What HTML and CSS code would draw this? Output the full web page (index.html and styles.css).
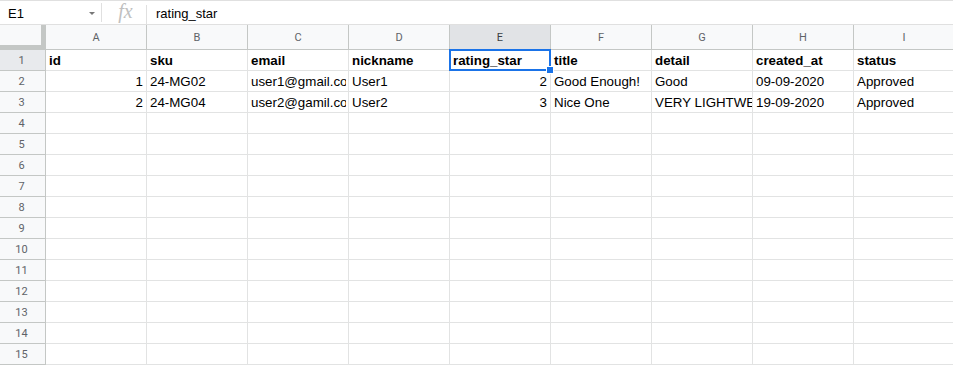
FILE: index.html
```html
<!DOCTYPE html>
<html>
<head>
<meta charset="utf-8">
<link rel="stylesheet" href="styles.css">
</head>
<body>
<div class="formula-bar">
  <div class="name-box"><span class="name">E1</span><span class="caret"></span></div>
  <div class="fx">fx</div>
  <div class="formula">rating_star</div>
</div>
<div class="sheet">
  <div class="corner"></div>
  <div class="colh">A</div><div class="colh">B</div><div class="colh">C</div><div class="colh">D</div><div class="colh sel">E</div><div class="colh">F</div><div class="colh">G</div><div class="colh">H</div><div class="colh">I</div>

  <div class="rowh sel">1</div>
  <div class="c b">id</div><div class="c b">sku</div><div class="c b">email</div><div class="c b">nickname</div><div class="c b active">rating_star</div><div class="c b">title</div><div class="c b">detail</div><div class="c b">created_at</div><div class="c b">status</div>

  <div class="rowh">2</div>
  <div class="c num">1</div><div class="c">24-MG02</div><div class="c"><span class="clip">user1@gmail.com</span></div><div class="c">User1</div><div class="c num">2</div><div class="c">Good Enough!</div><div class="c">Good</div><div class="c">09-09-2020</div><div class="c">Approved</div>

  <div class="rowh">3</div>
  <div class="c num">2</div><div class="c">24-MG04</div><div class="c"><span class="clip">user2@gamil.com</span></div><div class="c">User2</div><div class="c num">3</div><div class="c">Nice One</div><div class="c">VERY LIGHTWEIGHT</div><div class="c">19-09-2020</div><div class="c">Approved</div>

  <div class="rowh">4</div><div class="c"></div><div class="c"></div><div class="c"></div><div class="c"></div><div class="c"></div><div class="c"></div><div class="c"></div><div class="c"></div><div class="c"></div>
  <div class="rowh">5</div><div class="c"></div><div class="c"></div><div class="c"></div><div class="c"></div><div class="c"></div><div class="c"></div><div class="c"></div><div class="c"></div><div class="c"></div>
  <div class="rowh">6</div><div class="c"></div><div class="c"></div><div class="c"></div><div class="c"></div><div class="c"></div><div class="c"></div><div class="c"></div><div class="c"></div><div class="c"></div>
  <div class="rowh">7</div><div class="c"></div><div class="c"></div><div class="c"></div><div class="c"></div><div class="c"></div><div class="c"></div><div class="c"></div><div class="c"></div><div class="c"></div>
  <div class="rowh">8</div><div class="c"></div><div class="c"></div><div class="c"></div><div class="c"></div><div class="c"></div><div class="c"></div><div class="c"></div><div class="c"></div><div class="c"></div>
  <div class="rowh">9</div><div class="c"></div><div class="c"></div><div class="c"></div><div class="c"></div><div class="c"></div><div class="c"></div><div class="c"></div><div class="c"></div><div class="c"></div>
  <div class="rowh">10</div><div class="c"></div><div class="c"></div><div class="c"></div><div class="c"></div><div class="c"></div><div class="c"></div><div class="c"></div><div class="c"></div><div class="c"></div>
  <div class="rowh">11</div><div class="c"></div><div class="c"></div><div class="c"></div><div class="c"></div><div class="c"></div><div class="c"></div><div class="c"></div><div class="c"></div><div class="c"></div>
  <div class="rowh">12</div><div class="c"></div><div class="c"></div><div class="c"></div><div class="c"></div><div class="c"></div><div class="c"></div><div class="c"></div><div class="c"></div><div class="c"></div>
  <div class="rowh">13</div><div class="c"></div><div class="c"></div><div class="c"></div><div class="c"></div><div class="c"></div><div class="c"></div><div class="c"></div><div class="c"></div><div class="c"></div>
  <div class="rowh">14</div><div class="c"></div><div class="c"></div><div class="c"></div><div class="c"></div><div class="c"></div><div class="c"></div><div class="c"></div><div class="c"></div><div class="c"></div>
  <div class="rowh">15</div><div class="c"></div><div class="c"></div><div class="c"></div><div class="c"></div><div class="c"></div><div class="c"></div><div class="c"></div><div class="c"></div><div class="c"></div>
</div>
</body>
</html>
```
FILE: styles.css
```css
html, body {
  margin: 0;
  padding: 0;
  background: #fff;
  overflow: hidden;
}
body {
  width: 953px;
  height: 366px;
  font-family: "Liberation Sans", Arial, sans-serif;
  color: #000;
}
.formula-bar {
  display: flex;
  align-items: stretch;
  height: 25px;
  box-sizing: border-box;
  border-top: 1px solid #e0e0e0;
  border-bottom: 1px solid #e0e0e0;
}
.name-box {
  width: 102px;
  box-sizing: border-box;
  display: flex;
  align-items: center;
  padding-left: 8px;
  position: relative;
}
.name-box::after {
  content: "";
  position: absolute;
  right: 0;
  top: 2px;
  bottom: 2px;
  width: 1px;
  background: #e0e0e0;
}
.name {
  font-size: 13px;
  flex: 1;
  padding-top: 1px;
}
.caret {
  width: 0;
  height: 0;
  border-left: 3px solid transparent;
  border-right: 3px solid transparent;
  border-top: 3px solid #777;
  margin-right: 7px;
  margin-top: 2px;
}
.fx {
  width: 45px;
  box-sizing: border-box;
  text-align: center;
  font-family: "Liberation Serif", "Times New Roman", serif;
  font-style: italic;
  font-size: 20px;
  line-height: 21px;
  color: #c0c0c0;
  position: relative;
  padding-left: 2px;
}
.fx::after {
  content: "";
  position: absolute;
  right: 0;
  top: 4px;
  bottom: 0;
  width: 1px;
  background: #e0e0e0;
}
.formula {
  font-size: 13px;
  padding-left: 9px;
  display: flex;
  align-items: center;
  padding-top: 1px;
}
.sheet {
  display: grid;
  grid-template-columns: 46px repeat(9, 101px);
  grid-template-rows: 25px;
  grid-auto-rows: 21px;
}
.corner {
  background: #f8f9fa;
  box-sizing: border-box;
  border-right: 5px solid #c4c7c5;
  border-bottom: 5px solid #c4c7c5;
}
.colh {
  background: #f8f9fa;
  box-sizing: border-box;
  border-right: 1px solid #c4c7c5;
  border-bottom: 1px solid #c4c7c5;
  font-family: Roboto, "Liberation Sans", sans-serif;
  font-size: 11px;
  color: #5f6368;
  text-align: center;
  line-height: 24px;
  padding-top: 1px;
}
.colh.sel {
  background: #e1e3e6;
  color: #3c4043;
}
.rowh {
  background: #f8f9fa;
  box-sizing: border-box;
  border-right: 1px solid #c4c7c5;
  border-bottom: 1px solid #c4c7c5;
  font-family: Roboto, "Liberation Sans", sans-serif;
  font-size: 11px;
  color: #5f6368;
  text-align: center;
  line-height: 20px;
  padding: 1px 2px 0 0;
}
.rowh.sel {
  background: #e8eaed;
}
.c {
  box-sizing: border-box;
  border-right: 1px solid #e2e3e3;
  border-bottom: 1px solid #e2e3e3;
  font-size: 13.33px;
  line-height: 20px;
  padding: 1px 3px 0;
  white-space: nowrap;
  overflow: hidden;
  text-overflow: clip;
}
.clip {
  display: block;
  overflow: hidden;
  margin-right: -1px;
}
.c.b {
  font-weight: bold;
}
.c.num {
  text-align: right;
}
.c.active {
  position: relative;
  overflow: visible;
}
.c.active::before {
  content: "";
  position: absolute;
  left: -1px;
  top: -1px;
  right: -1px;
  bottom: -1px;
  border: 2px solid #1a73e8;
  pointer-events: none;
}
.c.active::after {
  content: "";
  position: absolute;
  right: -4px;
  bottom: -4px;
  width: 6px;
  height: 6px;
  background: #1a73e8;
  border: 1px solid #fff;
  z-index: 2;
}
```
